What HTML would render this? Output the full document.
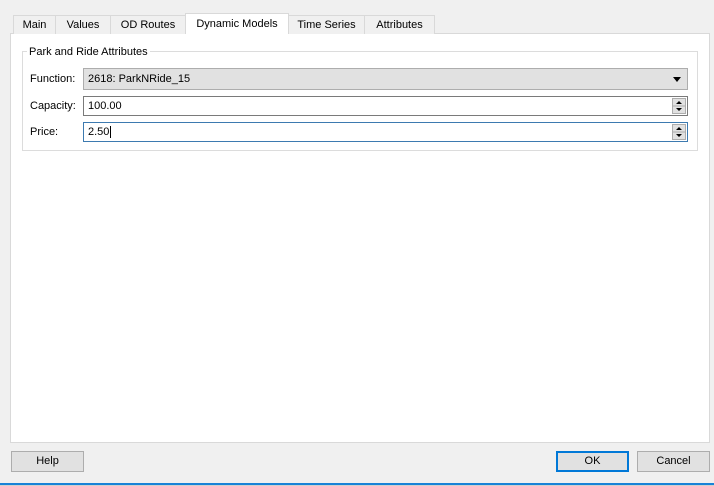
<!DOCTYPE html>
<html><head><style>
body{margin:0;width:714px;height:486px;background:#f0f0f0;font-family:"Liberation Sans",sans-serif;font-size:11px;color:#000;position:relative;overflow:hidden}
.a{position:absolute;box-sizing:border-box}
.tab{position:absolute;top:15px;height:19px;border:1px solid #d9d9d9;border-bottom:none;background:#f0f0f0;text-align:center;line-height:19px;box-sizing:border-box}
.spin{position:absolute;right:1px;width:14px;border:1px solid #adadad;background:#e1e1e1;box-sizing:border-box}
</style></head><body>
<div class="a" style="left:10px;top:33px;width:700px;height:410px;background:#fff;border:1px solid #d9d9d9"></div>
<div class="tab" style="left:13px;width:43px">Main</div>
<div class="tab" style="left:55px;width:56px">Values</div>
<div class="tab" style="left:110px;width:76px">OD Routes</div>
<div class="tab" style="left:288px;width:77px">Time Series</div>
<div class="tab" style="left:364px;width:71px">Attributes</div>
<div class="tab" style="left:185px;width:104px;top:13px;height:21px;background:#fff;line-height:21px">Dynamic Models</div>
<div class="a" style="left:22px;top:51px;width:676px;height:100px;border:1px solid #dcdcdc"></div>
<div class="a" style="left:27px;top:44px;background:#fff;padding:0 2px;line-height:16px">Park and Ride Attributes</div>
<div class="a" style="left:30px;top:73px">Function:</div>
<div class="a" style="left:30px;top:100px">Capacity:</div>
<div class="a" style="left:30px;top:126px">Price:</div>
<div class="a" style="left:83px;top:68px;width:605px;height:22px;background:#e1e1e1;border:1px solid #adadad;padding:5px 4px;line-height:11px">2618: ParkNRide_15
<svg style="position:absolute;right:6px;top:8px" width="8" height="5"><path d="M0 0H8L4 5Z" fill="#000"/></svg></div>
<div class="a" style="left:83px;top:96px;width:605px;height:20px;background:#fff;border:1px solid #7a7a7a;padding:4px 4px;line-height:11px">100.00
<div class="spin" style="top:1px;height:16px"><svg width="12" height="14" style="display:block"><path d="M3 5H9L6 2Z M3 9H9L6 12Z" fill="#000"/><path d="M0 7H12" stroke="#adadad"/></svg></div></div>
<div class="a" style="left:83px;top:122px;width:605px;height:20px;background:#fff;border:1px solid #3d7ab0;padding:4px 4px;line-height:11px">2.50<span style="border-left:1px solid #000;margin-left:1px"></span>
<div class="spin" style="top:1px;height:16px"><svg width="12" height="14" style="display:block"><path d="M3 5H9L6 2Z M3 9H9L6 12Z" fill="#000"/><path d="M0 7H12" stroke="#adadad"/></svg></div></div>
<div class="a" style="left:11px;top:451px;width:73px;height:21px;background:#e1e1e1;border:1px solid #adadad;text-align:center;line-height:19px">Help</div>
<div class="a" style="left:556px;top:451px;width:73px;height:21px;background:#e1e1e1;border:2px solid #0078d7;text-align:center;line-height:17px">OK</div>
<div class="a" style="left:637px;top:451px;width:73px;height:21px;background:#e1e1e1;border:1px solid #adadad;text-align:center;line-height:19px">Cancel</div>
<div class="a" style="left:0;top:483px;width:714px;height:2px;background:#1883d7"></div>
<div class="a" style="left:0;top:485px;width:714px;height:1px;background:#d0d0d0"></div>
</body></html>
